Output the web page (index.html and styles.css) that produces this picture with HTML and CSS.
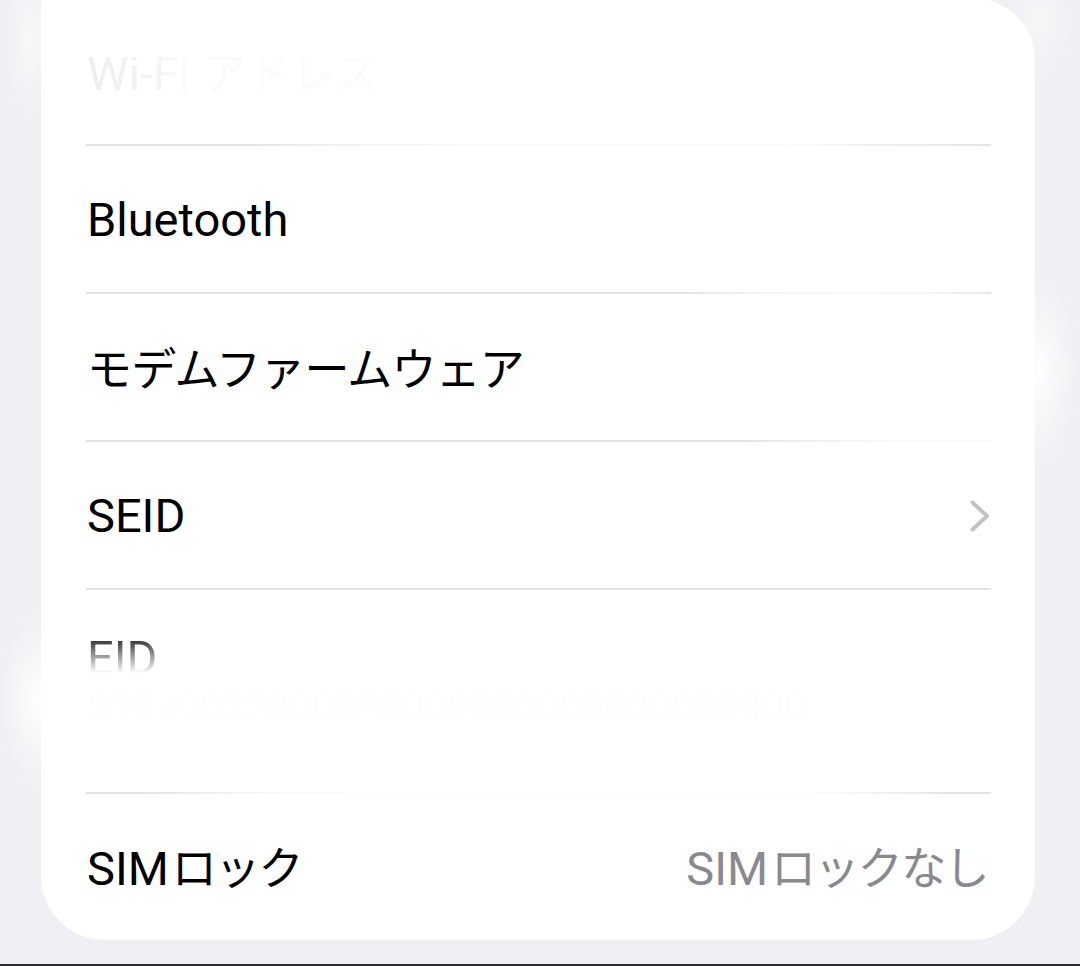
FILE: index.html
```html
<!DOCTYPE html>
<html lang="ja">
<head>
<meta charset="utf-8">
<title>情報</title>
<link rel="stylesheet" href="styles.css">
</head>
<body>
<div class="screen">
  <div class="card">
    <div class="row sep-1">
      <span class="label faded-top">Wi-Fi <span class="ja">アドレス</span></span>
    </div>
    <div class="row sep-2">
      <span class="label">Bluetooth</span>
    </div>
    <div class="row sep-3">
      <span class="label"><span class="ja">モデムファームウェア</span></span>
    </div>
    <div class="row sep-4">
      <span class="label">SEID</span>
      <svg class="chevron" width="22" height="34" viewBox="0 0 22 34" aria-hidden="true">
        <path d="M3.5 3.5 L18 17 L3.5 30.5" fill="none" stroke="#c4c4c7" stroke-width="4" stroke-linecap="round" stroke-linejoin="round"/>
      </svg>
    </div>
    <div class="row tall sep-5">
      <div class="tall-head">
        <span class="label faded-bottom">EID</span>
      </div>
      <div class="tall-value">89049032000000000000000000000000</div>
    </div>
    <div class="row last">
      <span class="label">SIM<span class="ja gap">ロック</span></span>
      <span class="value">SIM<span class="ja gap">ロックなし</span></span>
    </div>
  </div>
  <div class="home-line"></div>
</div>
</body>
</html>
```

FILE: styles.css
```css
html, body {
  margin: 0;
  padding: 0;
}

body {
  width: 1080px;
  height: 966px;
  overflow: hidden;
  font-family: "Roboto", "Liberation Sans", "Noto Sans CJK JP", sans-serif;
  color: #000;
  background-color: #efeff4;
  background-image:
    radial-gradient(ellipse 40px 90px at 38px 700px, rgba(255,255,255,0.95), rgba(255,255,255,0) 100%),
    radial-gradient(ellipse 40px 100px at 1040px 370px, rgba(255,255,255,0.9), rgba(255,255,255,0) 100%),
    radial-gradient(ellipse 36px 60px at 1040px 20px, rgba(255,255,255,0.5), rgba(255,255,255,0) 100%),
    radial-gradient(ellipse 30px 80px at 30px 40px, rgba(255,255,255,0.6), rgba(255,255,255,0) 100%);
}

.screen {
  display: flex;
  flex-direction: column;
}

.card {
  margin: -2px 0 0 41px;
  width: 994px;
  box-sizing: border-box;
  padding-left: 45px;
  background: #fff;
  border-radius: 0 62px 64px 64px;
}

.row {
  position: relative;
  height: 148px;
  margin-right: 44px;
  display: flex;
  align-items: center;
  justify-content: space-between;
  box-sizing: border-box;
}

.row::after {
  content: "";
  position: absolute;
  left: 0;
  right: 0;
  bottom: 0;
  height: 2px;
  background: #e2e2e5;
}

.row.last {
  height: 146px;
}

.row.last::after {
  display: none;
}

.sep-1::after {
  background: linear-gradient(90deg, #e3e3e6 0, #e3e3e6 18%, #f2f2f4 28%, #fafafb 45%, #fcfcfc 78%, #f0f0f2 86%, #e5e5e8 100%);
}

.sep-2::after {
  background: linear-gradient(90deg, #e2e2e5 0, #e2e2e5 66%, #f3f3f5 74%, #fafafb 85%, #f4f4f6 94%, #e6e6e9 100%);
}

.sep-3::after {
  background: linear-gradient(90deg, #e2e2e5 0, #e2e2e5 72%, #f0f0f2 80%, #fafafb 90%, #fafafb 100%);
}

.sep-5::after {
  background: linear-gradient(90deg, #e3e3e6 0, #e5e5e8 8%, #f6f6f7 18%, #fdfdfd 30%, #fdfdfd 80%, #f2f2f4 88%, #e3e3e6 96%);
}

.label {
  font-size: 47px;
  line-height: 48px;
  white-space: nowrap;
  margin-left: 1px;
}

.ja {
  font-family: "Noto Sans CJK JP", sans-serif;
  font-size: 45px;
  letter-spacing: -0.8px;
}

.ja.gap {
  margin-left: 3px;
  letter-spacing: -1.6px;
}

.value {
  font-size: 47px;
  line-height: 48px;
  color: #8a8a8e;
  white-space: nowrap;
  margin-right: 3px;
}

.chevron {
  display: block;
}

.row.tall {
  height: 204px;
  flex-direction: column;
  align-items: flex-start;
  justify-content: flex-start;
}

.tall-head {
  height: 144px;
  display: flex;
  align-items: center;
  margin-top: -4px;
}

.tall-value {
  margin-top: -44px;
  font-size: 40px;
  line-height: 44px;
  color: #fefefe;
  margin-left: 1px;
}

.faded-top {
  color: transparent;
  background: linear-gradient(90deg, #eeeeef 0, #f3f3f4 22%, #fafafa 32%, #fcfcfc 100%);
  -webkit-background-clip: text;
  background-clip: text;
}

.faded-bottom {
  color: transparent;
  background: linear-gradient(180deg, #3a3a3c 0, #3a3a3c 14%, #9a9a9c 45%, #ffffff 82%);
  -webkit-background-clip: text;
  background-clip: text;
}

.home-line {
  margin-top: 24px;
  height: 2px;
  background: #2e2e30;
}
```
